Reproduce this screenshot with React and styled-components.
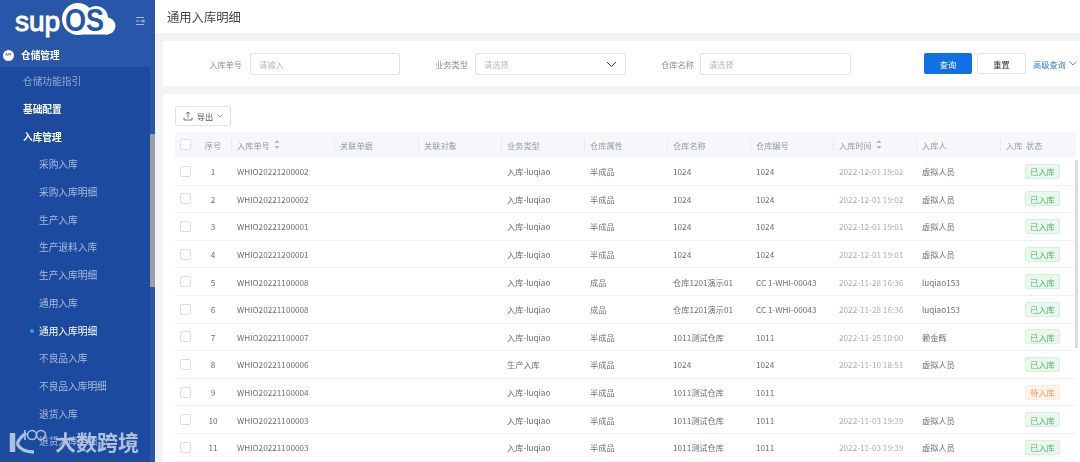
import React from 'react';
import styled, { createGlobalStyle } from 'styled-components';

const GlobalStyle = createGlobalStyle`
  html, body {
    margin: 0;
    padding: 0;
    height: 100%;
    overflow: hidden;
    background: #f2f3f5;
    font-family: "Noto Sans CJK SC", "Noto Sans", sans-serif;
  }
  * { box-sizing: border-box; }
`;

const menu = [
  { label: '仓储功能指引', level: 1, dim: true },
  { label: '基础配置', level: 1, bold: true },
  { label: '入库管理', level: 1, bold: true },
  { label: '采购入库', level: 2 },
  { label: '采购入库明细', level: 2 },
  { label: '生产入库', level: 2 },
  { label: '生产退料入库', level: 2 },
  { label: '生产入库明细', level: 2 },
  { label: '通用入库', level: 2 },
  { label: '通用入库明细', level: 2, active: true },
  { label: '不良品入库', level: 2 },
  { label: '不良品入库明细', level: 2 },
  { label: '退货入库', level: 2 },
  { label: '退货入库明细', level: 2 },
];

const columns = ['关联单据', '关联对象', '业务类型', '仓库属性', '仓库名称', '仓库编号'];

const rows = [
  ['1', 'WHIO20221200002', '入库-luqiao', '半成品', '1024', '1024', '2022-12-01 19:02', '虚拟人员', '已入库'],
  ['2', 'WHIO20221200002', '入库-luqiao', '半成品', '1024', '1024', '2022-12-01 19:02', '虚拟人员', '已入库'],
  ['3', 'WHIO20221200001', '入库-luqiao', '半成品', '1024', '1024', '2022-12-01 19:01', '虚拟人员', '已入库'],
  ['4', 'WHIO20221200001', '入库-luqiao', '半成品', '1024', '1024', '2022-12-01 19:01', '虚拟人员', '已入库'],
  ['5', 'WHIO20221100008', '入库-luqiao', '成品', '仓库1201演示01', 'CC 1-WHI-00043', '2022-11-28 16:36', 'luqiao153', '已入库'],
  ['6', 'WHIO20221100008', '入库-luqiao', '成品', '仓库1201演示01', 'CC 1-WHI-00043', '2022-11-28 16:36', 'luqiao153', '已入库'],
  ['7', 'WHIO20221100007', '入库-luqiao', '半成品', '1011测试仓库', '1011', '2022-11-25 10:00', '赖金辉', '已入库'],
  ['8', 'WHIO20221100006', '生产入库', '半成品', '1024', '1024', '2022-11-10 18:51', '虚拟人员', '已入库'],
  ['9', 'WHIO20221100004', '入库-luqiao', '半成品', '1011测试仓库', '1011', '', '', '待入库'],
  ['10', 'WHIO20221100003', '入库-luqiao', '半成品', '1011测试仓库', '1011', '2022-11-03 19:39', '虚拟人员', '已入库'],
  ['11', 'WHIO20221100003', '入库-luqiao', '半成品', '1011测试仓库', '1011', '2022-11-03 19:39', '虚拟人员', '已入库'],
];

const SupLogo = () => (
  <svg width="118" height="44" viewBox="0 0 118 44">
    <g fill="#fff">
      <circle cx="78" cy="19" r="16" />
      <circle cx="96" cy="18" r="12" />
      <circle cx="107" cy="26" r="8.5" />
      <rect x="78" y="25" width="30" height="9.5" />
    </g>
    <text x="15" y="31" fill="#fff" stroke="#fff" strokeWidth="1" fontFamily="Liberation Sans" fontSize="28">sup</text>
    <text
      x="65"
      y="31"
      fill="#2554a8"
      fontFamily="Liberation Sans"
      fontWeight="700"
      fontSize="32"
      textLength="39"
      lengthAdjust="spacingAndGlyphs"
    >
      OS
    </text>
  </svg>
);

const SortIcon = () => (
  <SortGlyph viewBox="0 0 6 9">
    <path d="M3 0 5.6 3H.4zM3 9 .4 6h5.2z" fill="#b4b8bf" />
  </SortGlyph>
);

const App = () => (
  <Page>
    <GlobalStyle />
    <Sidebar>
      <LogoBar>
        <SupLogo />
        <CollapseIcon viewBox="0 0 10 10">
          <path d="M1 1.5h8M1 8.5h8M1 5h3.5M9 3.5v3M9 5H6.5M7.5 3.8 6.3 5l1.2 1.2" stroke="#c4d0e6" strokeWidth="0.8" fill="none" />
        </CollapseIcon>
      </LogoBar>
      <GroupHead>
        <GroupDot>APP</GroupDot>
        仓储管理
      </GroupHead>
      <MenuBody>
        {menu.map((item) => (
          <MenuItem key={item.label} $level={item.level} $bold={item.bold} $active={item.active} $dim={item.dim}>
            {item.active && <ActiveDot />}
            {item.label}
          </MenuItem>
        ))}
        <MenuThumb />
      </MenuBody>
    </Sidebar>

    <Main>
      <TitleBar>通用入库明细</TitleBar>
      <FilterPanel>
        <FilterLabel $width={86}>入库单号</FilterLabel>
        <FilterInput $width={150} $gapLeft={1}>请输入</FilterInput>
        <FilterLabel $width={75}>业务类型</FilterLabel>
        <FilterInput $width={151}>
          请选择
          <svg width="11" height="7" viewBox="0 0 11 7">
            <path d="M1 1l4.5 4.5L10 1" stroke="#444" strokeWidth="1" fill="none" />
          </svg>
        </FilterInput>
        <FilterLabel $width={75}>仓库名称</FilterLabel>
        <FilterInput $width={151} $gapLeft={-1}>请选择</FilterInput>
        <PrimaryButton>查询</PrimaryButton>
        <GhostButton>重置</GhostButton>
        <AdvancedLink>
          高级查询
          <svg width="8" height="5" viewBox="0 0 8 5">
            <path d="M.5.5 4 4 7.5.5" stroke="#2f7fe0" strokeWidth="0.8" fill="none" />
          </svg>
        </AdvancedLink>
      </FilterPanel>

      <TablePanel>
        <ExportButton>
          <svg width="10" height="10" viewBox="0 0 10 10">
            <path d="M5 7V1M3.2 2.7 5 1l1.8 1.7M1 6.5V9h8V6.5" stroke="#555" strokeWidth="0.8" fill="none" />
          </svg>
          导出
          <svg width="6" height="4" viewBox="0 0 6 4">
            <path d="M.5.5 3 3 5.5.5" stroke="#777" strokeWidth="0.7" fill="none" />
          </svg>
        </ExportButton>

        <HeadRow>
          <Cell><CheckBox /></Cell>
          <HeadCell $center>序号</HeadCell>
          <HeadCell $divider>入库单号<SortIcon /></HeadCell>
          {columns.map((c) => (
            <HeadCell key={c} $divider>{c}</HeadCell>
          ))}
          <HeadCell $divider>入库时间<SortIcon /></HeadCell>
          <HeadCell $divider>入库人</HeadCell>
          <HeadCell $divider>入库</HeadCell>
          <HeadCell>状态</HeadCell>
        </HeadRow>

        <ScrollThumb />

        {rows.map((r) => (
          <BodyRow key={r[0]}>
            <Cell><CheckBox /></Cell>
            <Cell $center>{r[0]}</Cell>
            <Cell>{r[1]}</Cell>
            <Cell />
            <Cell />
            <Cell>{r[2]}</Cell>
            <Cell>{r[3]}</Cell>
            <Cell>{r[4]}</Cell>
            <Cell>{r[5]}</Cell>
            <Cell $muted>{r[6]}</Cell>
            <Cell>{r[7]}</Cell>
            <Cell />
            <Cell><StatusTag $pending={r[8] === '待入库'}>{r[8]}</StatusTag></Cell>
          </BodyRow>
        ))}
      </TablePanel>
    </Main>

    <Watermark>
      <WatermarkLogo viewBox="0 0 44 30">
        <path d="M4.5 7v19" stroke="#bccae0" strokeWidth="5.5" fill="none" />
        <path d="M18 7Q8 15 10 19q4 7 16 7" stroke="#bccae0" strokeWidth="3.4" fill="none" />
        <path d="M17 4v10" stroke="#bccae0" strokeWidth="1.6" fill="none" />
        <circle cx="24" cy="9" r="4.5" stroke="#bccae0" strokeWidth="1.6" fill="none" />
        <circle cx="33" cy="9" r="4.5" stroke="#bccae0" strokeWidth="1.6" fill="none" />
      </WatermarkLogo>
      大数跨境
    </Watermark>
  </Page>
);

const Page = styled.div`
  position: relative;
  display: flex;
  width: 1080px;
  height: 462px;
  overflow: hidden;
  filter: blur(0.4px);
`;

const Sidebar = styled.aside`
  flex: 0 0 155px;
  display: flex;
  flex-direction: column;
  background: #2856a9;
`;

const LogoBar = styled.div`
  flex: 0 0 44px;
  display: flex;
  align-items: center;
  justify-content: space-between;
  padding-right: 10px;
`;

const CollapseIcon = styled.svg`
  width: 10px;
  height: 10px;
  margin-bottom: 3px;
`;

const GroupHead = styled.div`
  flex: 0 0 22px;
  display: flex;
  align-items: center;
  gap: 7px;
  padding-left: 3px;
  color: #fff;
  font-size: 9.7px;
  font-weight: 700;
`;

const GroupDot = styled.span`
  width: 11px;
  height: 11px;
  border-radius: 50%;
  background: #fff;
  color: #2856a9;
  font-size: 3px;
  line-height: 11px;
  text-align: center;
`;

const MenuBody = styled.div`
  position: relative;
  flex: 1;
  width: 150px;
  margin-top: 1px;
  padding-top: 0.5px;
  background: #1c4a9e;
`;

const MenuItem = styled.div`
  position: relative;
  height: 27.7px;
  display: flex;
  align-items: center;
  padding-left: ${(p) => (p.$level === 1 ? 23 : 39)}px;
  font-size: 9.7px;
  font-weight: ${(p) => (p.$bold ? 700 : 400)};
  color: ${(p) => (p.$bold || p.$active ? '#fff' : p.$dim ? '#93a9d2' : '#a9bbdd')};
`;

const ActiveDot = styled.span`
  position: absolute;
  left: 30px;
  top: 12px;
  width: 4px;
  height: 4px;
  border-radius: 50%;
  background: #1ea7f5;
`;

const MenuThumb = styled.div`
  position: absolute;
  right: -5px;
  top: 67px;
  width: 5px;
  height: 153px;
  background: #9a9ea6;
`;

const Main = styled.main`
  flex: 1;
  display: flex;
  flex-direction: column;
  min-width: 0;
`;

const TitleBar = styled.header`
  flex: 0 0 33px;
  padding-left: 12px;
  display: flex;
  align-items: center;
  background: #fff;
  color: #444;
  font-size: 12.3px;
`;

const FilterPanel = styled.section`
  flex: 0 0 45px;
  margin: 8px 0 8px 8px;
  padding-top: 12px;
  display: flex;
  align-items: flex-start;
  background: #fff;
`;

const FilterLabel = styled.label`
  width: ${(p) => p.$width}px;
  height: 21px;
  padding-right: 7px;
  display: flex;
  align-items: center;
  justify-content: flex-end;
  color: #8a8f98;
  font-size: 8.2px;
`;

const FilterInput = styled.div`
  width: ${(p) => p.$width}px;
  height: 22px;
  margin-left: ${(p) => p.$gapLeft || 0}px;
  padding: 0 8px;
  display: flex;
  align-items: center;
  justify-content: space-between;
  border: 1px solid #dfe2e7;
  border-radius: 2px;
  color: #b6bac1;
  font-size: 8.2px;
`;

const PrimaryButton = styled.button`
  width: 48px;
  height: 21px;
  margin-left: 73px;
  padding: 0;
  border: 0;
  border-radius: 2px;
  background: #1170e4;
  color: #fff;
  font: inherit;
  font-size: 8.2px;
`;

const GhostButton = styled.button`
  width: 49px;
  height: 21px;
  margin-left: 5px;
  padding: 0;
  border: 1px solid #dfe2e7;
  border-radius: 2px;
  background: #fff;
  color: #333;
  font: inherit;
  font-size: 8.2px;
`;

const AdvancedLink = styled.a`
  margin-left: 7px;
  height: 21px;
  display: flex;
  align-items: center;
  gap: 3px;
  color: #2f7fe0;
  font-size: 8.2px;
`;

const TablePanel = styled.section`
  position: relative;
  flex: 1;
  min-height: 0;
  overflow: hidden;
  margin-left: 8px;
  padding: 12px 4px 0 12px;
  background: #fff;
`;

const ExportButton = styled.button`
  width: 56px;
  height: 20px;
  margin-bottom: 5.5px;
  padding: 0;
  display: flex;
  align-items: center;
  justify-content: center;
  gap: 4px;
  border: 1px solid #dfe2e7;
  border-radius: 2px;
  background: #fff;
  color: #555;
  font: inherit;
  font-size: 8.2px;
`;

const gridColumns = '25px 31px 103px 84px 83px 83px 83px 83px 83px 83px 84px 20px 56px';

const HeadRow = styled.div`
  display: grid;
  grid-template-columns: ${gridColumns};
  height: 26.5px;
  background: #f5f7fa;
`;

const BodyRow = styled.div`
  display: grid;
  grid-template-columns: ${gridColumns};
  height: 27.6px;
  border-bottom: 1px solid #eff1f4;
`;

const Cell = styled.div`
  display: flex;
  align-items: center;
  justify-content: ${(p) => (p.$center ? 'center' : 'flex-start')};
  padding-left: ${(p) => (p.$center ? 0 : 6)}px;
  padding-right: ${(p) => (p.$center ? 5 : 0)}px;
  color: ${(p) => (p.$muted ? '#a9aeb8' : '#6a6f78')};
  font-size: 8.2px;
  white-space: nowrap;
  &:first-child { padding-left: 5px; }
`;

const HeadCell = styled(Cell)`
  position: relative;
  color: #969ba3;
  &::before {
    content: '';
    display: ${(p) => (p.$divider ? 'block' : 'none')};
    position: absolute;
    left: 0;
    top: 7px;
    bottom: 7px;
    width: 1px;
    background: #e8eaee;
  }
`;

const CheckBox = styled.span`
  width: 11px;
  height: 11px;
  border: 1px solid #dcdfe4;
  border-radius: 2px;
  background: #fff;
`;

const SortGlyph = styled.svg`
  width: 6px;
  height: 9px;
  margin-left: 4px;
`;

const StatusTag = styled.span`
  width: 35px;
  height: 15px;
  margin-left: -1px;
  display: flex;
  align-items: center;
  justify-content: center;
  border: 1px solid ${(p) => (p.$pending ? '#fdebd9' : '#d6f0dc')};
  border-radius: 2px;
  background: ${(p) => (p.$pending ? '#fef3e8' : '#e9f7ec')};
  color: ${(p) => (p.$pending ? '#ef9a4f' : '#4cb669')};
  font-size: 8.2px;
`;

const ScrollThumb = styled.div`
  position: absolute;
  right: 2px;
  top: 66px;
  width: 3px;
  height: 188px;
  background: #d9dbdf;
`;

const Watermark = styled.div`
  position: absolute;
  left: 8px;
  bottom: 6px;
  display: flex;
  align-items: center;
  gap: 3px;
  color: #bccae0;
  font-size: 21px;
  font-weight: 700;
  line-height: 30px;
  opacity: 0.92;
`;

const WatermarkLogo = styled.svg`
  width: 44px;
  height: 30px;
`;

export default App;
